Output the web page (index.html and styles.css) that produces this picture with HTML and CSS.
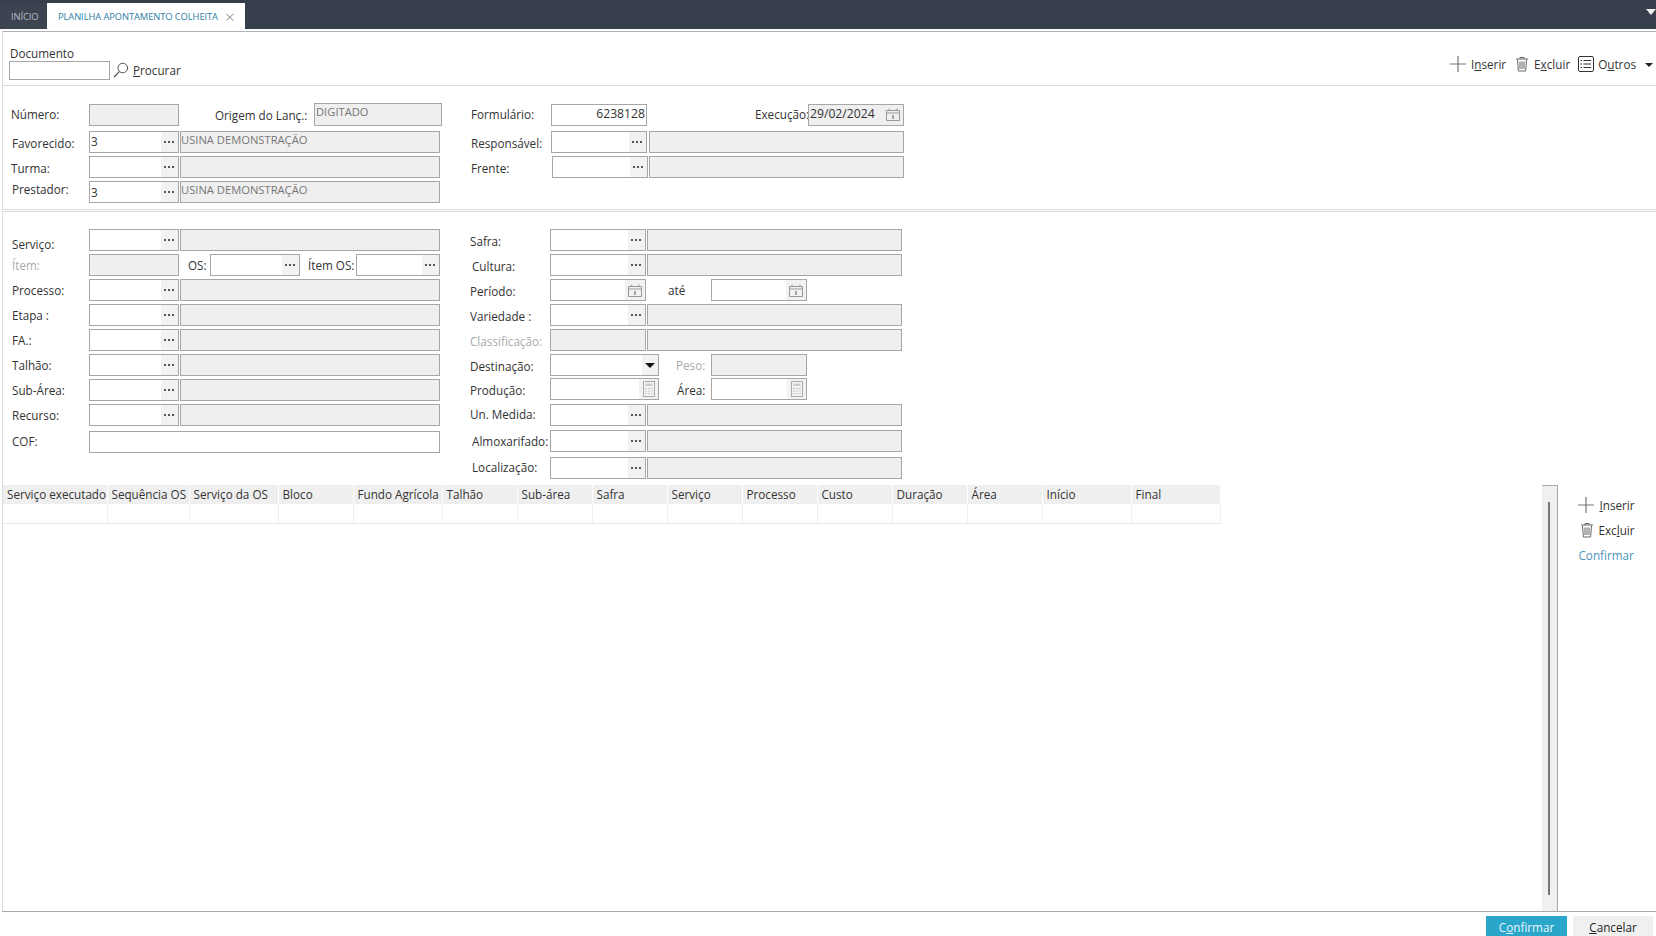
FILE: index.html
```html
<!DOCTYPE html>
<html lang="pt-BR">
<head>
<meta charset="utf-8">
<title>Planilha Apontamento Colheita</title>
<link rel="stylesheet" href="styles.css">
</head>
<body>
<svg class="defs" width="0" height="0" aria-hidden="true">
  <symbol id="plus" viewBox="0 0 16 16"><path d="M8 0V16M0 8H16" fill="none" stroke="#777" stroke-width="1.2"/></symbol>
  <symbol id="trash" viewBox="0 0 14 16"><path d="M1 3H13M5 3V1.5H9V3M2.5 3.5L3.4 15H10.6L11.5 3.5M5 5.5V13M7 5.5V13M9 5.5V13" fill="none" stroke="#666" stroke-width="1"/></symbol>
  <symbol id="list" viewBox="0 0 16 16"><rect x=".5" y=".5" width="15" height="15" rx="1.5" fill="none" stroke="#333"/><path d="M5.5 4.5H13M5.5 8H13M5.5 11.5H13" stroke="#333"/><path d="M2.5 4.5H4M2.5 8H4M2.5 11.5H4" stroke="#333"/></symbol>
  <symbol id="search" viewBox="0 0 16 16"><circle cx="9.8" cy="6" r="4.8" fill="none" stroke="#555" stroke-width="1"/><path d="M6.4 9.6L1 15" stroke="#555" stroke-width="1.2"/></symbol>
  <symbol id="cal" viewBox="0 0 14 13"><path d="M.5 2.5H13.5V12.5H.5ZM.5 5H13.5" fill="none" stroke="#999"/><path d="M3 .5V3M11 .5V3" stroke="#999"/><path d="M7 7V11" stroke="#555"/></symbol>
  <symbol id="calc" viewBox="0 0 12 16"><rect x=".5" y=".5" width="11" height="15" fill="#f4f4f4" stroke="#aaa"/><rect x="2.5" y="2.5" width="7" height="2.5" fill="#ccc"/><path d="M2.5 7.5H3.5M5.5 7.5H6.5M8.5 7.5H9.5M2.5 10H3.5M5.5 10H6.5M8.5 10H9.5M2.5 12.5H3.5M5.5 12.5H6.5M8.5 12.5H9.5" stroke="#999"/></symbol>
</svg>

<header class="topbar">
  <div class="tab tab-home">INÍCIO</div>
  <div class="tab tab-active"><span>PLANILHA APONTAMENTO COLHEITA</span><span class="tab-close">×</span></div>
  <div class="topbar-caret"></div>
</header>

<main class="page">
  <section class="toolbar">
    <div class="doc-block">
      <div class="doc-label">Documento</div>
      <div class="doc-row">
        <div class="field doc-input"></div>
        <svg class="ico-search"><use href="#search"/></svg>
        <span class="doc-find"><u>P</u>rocurar</span>
      </div>
    </div>
    <div class="tools">
      <svg class="ico-plus"><use href="#plus"/></svg><span class="tool-text t-ins">I<u>n</u>serir</span>
      <svg class="ico-trash"><use href="#trash"/></svg><span class="tool-text t-exc">E<u>x</u>cluir</span>
      <svg class="ico-list"><use href="#list"/></svg><span class="tool-text t-out">O<u>u</u>tros</span>
      <span class="caret-dark"></span>
    </div>
  </section>

  <section class="form-sec sec-one">
    <div class="col col-left">
      <div class="row row-gap5">
        <label class="lbl lbl-11 lbl-up1">Número:</label><div class="field dis w90"></div>
        <label class="lbl lbl-origem">Origem do Lanç.:</label><div class="field dis origem"><span class="val">DIGITADO</span></div>
      </div>
      <div class="row">
        <label class="lbl lbl-down">Favorecido:</label><div class="field lookup w90"><span class="val dark">3</span><b class="dots"></b></div><div class="field dis desc"><span class="val">USINA DEMONSTRAÇÃO</span></div>
      </div>
      <div class="row">
        <label class="lbl lbl-11 lbl-down">Turma:</label><div class="field lookup w90"><b class="dots"></b></div><div class="field dis desc"></div>
      </div>
      <div class="row">
        <label class="lbl lbl-up">Prestador:</label><div class="field lookup w90"><span class="val dark val-low">3</span><b class="dots"></b></div><div class="field dis desc"><span class="val">USINA DEMONSTRAÇÃO</span></div>
      </div>
    </div>
    <div class="col col-right">
      <div class="row row-gap5">
        <label class="lbl lbl-r1 w-r1 lbl-up1">Formulário:</label><div class="field w96 num">6238128</div>
        <label class="lbl lbl-exec lbl-up1">Execução:</label><div class="field dis w96 date"><span class="val dark">29/02/2024</span><svg class="ico-cal bare"><use href="#cal"/></svg></div>
      </div>
      <div class="row">
        <label class="lbl lbl-r1 w-r1 lbl-down">Responsável:</label><div class="field lookup w96"><b class="dots"></b></div><div class="field dis desc-r1"></div>
      </div>
      <div class="row">
        <label class="lbl lbl-r1 w-r1b lbl-down">Frente:</label><div class="field lookup w96"><b class="dots"></b></div><div class="field dis desc-r1b"></div>
      </div>
    </div>
  </section>

  <section class="form-sec sec-two">
    <div class="col col-left">
      <div class="row"><label class="lbl lbl-down2">Serviço:</label><div class="field lookup w90"><b class="dots"></b></div><div class="field dis desc"></div></div>
      <div class="row">
        <label class="lbl muted">Ítem:</label><div class="field dis w90"></div>
        <label class="lbl lbl-os">OS:</label><div class="field lookup w90"><b class="dots"></b></div>
        <label class="lbl lbl-itemos">Ítem OS:</label><div class="field lookup w84"><b class="dots"></b></div>
      </div>
      <div class="row"><label class="lbl">Processo:</label><div class="field lookup w90"><b class="dots"></b></div><div class="field dis desc"></div></div>
      <div class="row"><label class="lbl">Etapa :</label><div class="field lookup w90"><b class="dots"></b></div><div class="field dis desc"></div></div>
      <div class="row"><label class="lbl">FA.:</label><div class="field lookup w90"><b class="dots"></b></div><div class="field dis desc"></div></div>
      <div class="row"><label class="lbl">Talhão:</label><div class="field lookup w90"><b class="dots"></b></div><div class="field dis desc"></div></div>
      <div class="row"><label class="lbl">Sub-Área:</label><div class="field lookup w90"><b class="dots"></b></div><div class="field dis desc"></div></div>
      <div class="row row-gap5"><label class="lbl">Recurso:</label><div class="field lookup w90"><b class="dots"></b></div><div class="field dis desc"></div></div>
      <div class="row"><label class="lbl lbl-up1">COF:</label><div class="field wcof"></div></div>
    </div>
    <div class="col col-right2">
      <div class="row"><label class="lbl lbl-r2 w-r2">Safra:</label><div class="field lookup w96"><b class="dots"></b></div><div class="field dis desc-r2"></div></div>
      <div class="row"><label class="lbl lbl-r2b w-r2">Cultura:</label><div class="field lookup w96"><b class="dots"></b></div><div class="field dis desc-r2"></div></div>
      <div class="row">
        <label class="lbl lbl-r2 w-r2">Período:</label><div class="field w96 datepick"><span class="btn-ico"><svg class="ico-cal"><use href="#cal"/></svg></span></div>
        <label class="lbl lbl-ate">até</label><div class="field w96 datepick"><span class="btn-ico"><svg class="ico-cal"><use href="#cal"/></svg></span></div>
      </div>
      <div class="row"><label class="lbl lbl-r2 w-r2">Variedade :</label><div class="field lookup w96"><b class="dots"></b></div><div class="field dis desc-r2"></div></div>
      <div class="row"><label class="lbl lbl-r2 w-r2 muted">Classificação:</label><div class="field dis w96"></div><div class="field dis desc-r2"></div></div>
      <div class="row row-gap2">
        <label class="lbl lbl-r2 w-r2">Destinação:</label><div class="field w109 select"><span class="sel-btn"><i class="sel-arrow"></i></span></div>
        <label class="lbl lbl-peso muted">Peso:</label><div class="field dis w96"></div>
      </div>
      <div class="row row-gap4">
        <label class="lbl lbl-r2 w-r2">Produção:</label><div class="field w109 datepick"><span class="btn-ico calc"><svg class="ico-calc"><use href="#calc"/></svg></span></div>
        <label class="lbl lbl-area">Área:</label><div class="field w96 datepick"><span class="btn-ico calc"><svg class="ico-calc"><use href="#calc"/></svg></span></div>
      </div>
      <div class="row row-gap4"><label class="lbl lbl-r2 w-r2 lbl-tight">Un. Medida:</label><div class="field lookup w96"><b class="dots"></b></div><div class="field dis desc-r2"></div></div>
      <div class="row row-gap5"><label class="lbl lbl-r2b w-r2 lbl-mid">Almoxarifado:</label><div class="field lookup w96"><b class="dots"></b></div><div class="field dis desc-r2"></div></div>
      <div class="row"><label class="lbl lbl-r2b w-r2 lbl-tight">Localização:</label><div class="field lookup w96"><b class="dots"></b></div><div class="field dis desc-r2"></div></div>
    </div>
  </section>

  <section class="grid-area">
    <table class="grid">
      <colgroup>
        <col class="c104"><col class="c82"><col class="c89"><col class="c75"><col class="c89"><col class="c75"><col class="c75"><col class="c75"><col class="c75"><col class="c75"><col class="c75"><col class="c75"><col class="c75"><col class="c89"><col class="c89">
      </colgroup>
      <thead>
        <tr><th>Serviço executado</th><th>Sequência OS</th><th>Serviço da OS</th><th>Bloco</th><th>Fundo Agrícola</th><th>Talhão</th><th>Sub-área</th><th>Safra</th><th>Serviço</th><th>Processo</th><th>Custo</th><th>Duração</th><th>Área</th><th>Início</th><th>Final</th></tr>
      </thead>
      <tbody>
        <tr><td></td><td></td><td></td><td></td><td></td><td></td><td></td><td></td><td></td><td></td><td></td><td></td><td></td><td></td><td></td></tr>
      </tbody>
    </table>
    <div class="vscroll"><div class="vthumb"></div></div>
    <aside class="grid-actions">
      <div class="act"><svg class="ico-plus"><use href="#plus"/></svg><span class="tool-text"><u>I</u>nserir</span></div>
      <div class="act act-exc"><svg class="ico-trash"><use href="#trash"/></svg><span class="tool-text">Exc<u>l</u>uir</span></div>
      <div class="act-link">Confirmar</div>
    </aside>
  </section>

  <footer class="foot">
    <div class="btn btn-primary">C<u>o</u>nfirmar</div>
    <div class="btn btn-light"><u>C</u>ancelar</div>
  </footer>
</main>
</body>
</html>
```

FILE: styles.css
```css
* { box-sizing: border-box; }
html, body { margin: 0; height: 100%; }
body {
  width: 1656px; height: 936px; overflow: hidden; background: #fff;
  font: 11.7px/16px "Open Sans", "Noto Sans", sans-serif; color: #333;
}
.defs { position: absolute; }

.topbar { height: 29px; background: #383f4c; display: flex; align-items: flex-end; position: relative; }
.tab { height: 26px; display: flex; align-items: center; font-size: 9.4px; letter-spacing: -.1px; padding-top: 2px; }
.tab-home { width: 47px; padding-left: 11px; color: #b9bec6; background: #3c4351; }
.tab-active { width: 198px; padding-left: 11px; background: #fff; color: #2c80a8; }
.tab-close { margin-left: 7px; font-size: 17px; font-weight: 300; color: #888; line-height: 16px; }
.topbar-caret { position: absolute; right: 0; top: 9px; border: 5px solid transparent; border-top: 6px solid #eee; border-bottom: 0; }

.page { height: 907px; display: flex; flex-direction: column; padding-top: 2px; }

.toolbar { height: 54px; margin-left: 2px; border-top: 1px solid #aeb2b6; border-left: 1px solid #dcdcdc; display: flex; justify-content: space-between; position: relative; }
.doc-block { padding: 13px 0 0 6px; }
.doc-label { height: 16px; line-height: 16px; margin-left: 1px; }
.doc-row { display: flex; align-items: flex-start; }
.field { height: 22px; border: 1px solid #a6a6a6; background: #fff; position: relative; flex: none; }
.doc-input { width: 101px; height: 19px; }
.ico-search { width: 16px; height: 16px; margin: 1px 0 0 3px; }
.doc-find { margin: 1px 0 0 4px; }
.tools { display: flex; align-items: center; padding: 20px 0 0 0; height: 44px; }
.ico-plus { width: 16px; height: 16px; flex: none; }
.ico-trash { width: 14px; height: 16px; flex: none; }
.ico-list { width: 16px; height: 16px; flex: none; }
.tool-text { line-height: 16px; }
.t-ins { margin: 0 9px 0 5px; }
.t-exc { margin: 0 8px 0 5px; }
.t-out { margin: 0 9px 0 4px; }
.caret-dark { border: 4px solid transparent; border-top: 4px solid #222; border-bottom: 0; margin: 2px 3px 0 0; }

.form-sec { display: flex; margin-left: 2px; border-left: 1px solid #dcdcdc; border-top: 1px solid #dadada; padding-top: 18px; }
.sec-one { height: 125px; border-bottom: 1px solid #dadada; margin-bottom: 1px; }
.sec-two { height: 274px; padding-top: 17px; }
.col-left { width: 444px; flex: none; }
.col-right { flex: none; }
.col-right2 { flex: none; }
.row { display: flex; height: 22px; margin-bottom: 3px; align-items: center; }
.row-gap5 { margin-bottom: 5px; }
.row-gap4 { margin-bottom: 4px; }
.row-gap2 { margin-bottom: 2px; }

.lbl { flex: none; width: 86px; padding-left: 9px; white-space: nowrap; }
.lbl-11 { padding-left: 8px; }
.lbl-down { padding-top: 2px; }
.lbl-down2 { padding-top: 7px; }
.lbl-up { padding-bottom: 7px; }
.lbl-up1 { padding-bottom: 2px; }
.muted { color: #aaa; }
.lbl-origem { width: 135px; padding-left: 36px; }
.lbl-os { width: 31px; padding: 0 0 0 9px; }
.lbl-itemos { width: 56px; padding: 0 0 0 8px; }
.lbl-r1 { padding-left: 24px; }
.w-r1 { width: 104px; }
.w-r1b { width: 105px; }
.lbl-exec { width: 161px; padding-left: 108px; }
.w-r2 { width: 103px; padding-left: 23px; padding-top: 2px; }
.lbl-r2b { padding-left: 25px; }
.lbl-tight { padding-top: 0; padding-bottom: 2px; }
.lbl-mid { padding-top: 0; }
.lbl-ate { width: 65px; padding-left: 22px; }
.lbl-peso { width: 52px; padding-left: 17px; }
.lbl-area { width: 52px; padding-left: 18px; padding-top: 2px; }

.w90 { width: 90px; }
.w84 { width: 84px; }
.w96 { width: 96px; }
.w109 { width: 109px; }
.wcof { width: 351px; }
.desc { width: 260px; margin-left: 1px; }
.desc-r1 { width: 255px; margin-left: 2px; }
.desc-r1b { width: 255px; margin-left: 1px; }
.desc-r2 { width: 255px; margin-left: 1px; }
.origem { width: 128px; height: 23px; margin-top: -2px; }
.dis { background: #efefef; }
.val { display: block; padding-left: 0; font-size: 11.2px; line-height: 15px; color: #777; white-space: nowrap; }
.origem .val { line-height: 16px; padding-left: 1px; }
.val.dark { color: #333; font-size: 11.7px; }
.lookup .val { line-height: 18px; padding-left: 1px; }
.lookup .val-low { line-height: 20px; }

.dots { position: absolute; right: 0; top: 0; width: 17px; height: 20px; background: #f2f2f2; }
.dots::before {
  content: ""; position: absolute; left: 7px; top: 9px; width: 2px; height: 2px;
  background: #222; border-radius: 50%; box-shadow: 4px 0 0 #222, -4px 0 0 #222;
}
.num { text-align: right; padding-right: 1px; font-size: 12.2px; line-height: 18px; }
.date { display: flex; justify-content: space-between; padding-right: 3px; }
.date .val { padding-left: 1px; font-size: 12.2px; line-height: 18px; }
.ico-cal { width: 14px; height: 13px; }
.bare { margin-top: 3px; }
.btn-ico { position: absolute; right: 0; top: 0; width: 20px; height: 20px; background: #f2f2f2; display: flex; align-items: center; justify-content: center; }
.ico-calc { width: 12px; height: 16px; }
.calc { width: 19px; }
.sel-btn { position: absolute; right: 0; top: 0; width: 16px; height: 20px; background: #f2f2f2; display: flex; align-items: center; justify-content: center; }
.sel-arrow { border: 5px solid transparent; border-top: 5px solid #111; border-bottom: 0; }

.grid-area { flex: 1; display: flex; align-items: stretch; margin-left: 2px; padding-left: 1px; border-left: 1px solid #dcdcdc; min-height: 0; }
.grid { border-collapse: collapse; table-layout: fixed; width: 1217px; height: 38px; flex: none; margin-left: -1px; }
.c104 { width: 104px; } .c82 { width: 82px; } .c89 { width: 89px; } .c75 { width: 75px; }
.grid th { height: 19px; background: #efefef; font-weight: 400; text-align: left; padding: 0 0 0 4px; border-right: 1px solid #fff; white-space: nowrap; overflow: hidden; line-height: 19px; }
.grid td { height: 19px; border-right: 1px solid #efefef; border-bottom: 1px solid #e8e8e8; }
.vscroll { width: 16px; margin-left: 321px; background: #f0f0f0; border-top: 1px solid #a9a9a9; border-right: 1px solid #a9a9a9; display: flex; flex-direction: column; align-items: center; padding: 16px 0 16px; flex: none; }
.vthumb { width: 2px; background: #777; flex: 1; }
.grid-actions { padding: 12px 0 0 20px; }
.act { display: flex; align-items: center; height: 16px; gap: 6px; margin-bottom: 9px; }
.act-exc { padding-left: 2px; gap: 5px; }
.act-link { color: #4a94ba; margin-left: 1px; }

.foot { flex: none; height: 25px; border-top: 1px solid #a9a9a9; margin-left: 2px; display: flex; justify-content: flex-end; padding: 4px 3px 0 0; gap: 6px; }
.btn { width: 80px; height: 20px; text-align: center; line-height: 22px; }
.btn-primary { background: #2ba6cb; color: #e8f6fb; width: 81px; }
.btn-light { background: #f0f0f0; color: #222; }
```
